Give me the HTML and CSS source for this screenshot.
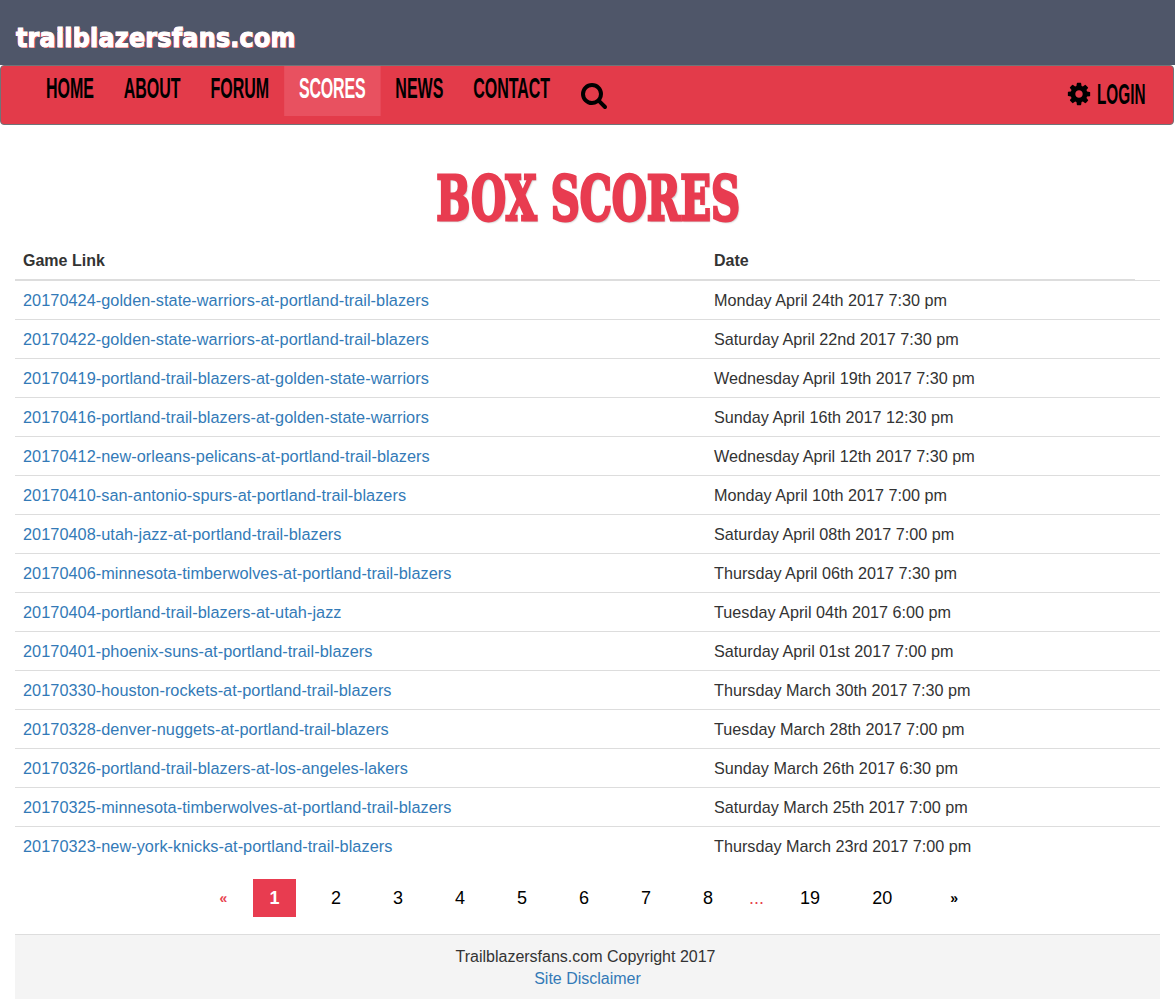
FILE: index.html
```html
<!DOCTYPE html>
<html lang="en">
<head>
  <meta charset="UTF-8">
  <meta name="viewport" content="width=device-width, initial-scale=1.0">
  <title>Box Scores</title>
  <link rel="stylesheet" href="styles.css">
</head>
<body>
  <header class="site-header">
    <a class="logo" href="#">trailblazersfans.com</a>
  </header>

  <nav class="navbar">
    <div class="nav-left">
      <ul class="nav-links">
        <li><a href="#">HOME</a></li>
        <li><a href="#">ABOUT</a></li>
        <li><a href="#">FORUM</a></li>
        <li class="active"><a href="#">SCORES</a></li>
        <li><a href="#">NEWS</a></li>
        <li><a href="#">CONTACT</a></li>
      </ul>
    </div>
    <a class="search-link" href="#">
      <svg class="search-icon" viewBox="0 0 1664 1664"><path d="M1152 704q0-185-131.5-316.5t-316.5-131.5-316.5 131.5-131.5 316.5 131.5 316.5 316.5 131.5 316.5-131.5 131.5-316.5zm512 832q0 52-38 90t-90 38q-54 0-90-38l-343-342q-179 124-399 124-143 0-273.5-55.5t-225-150-150-225-55.5-273.5 55.5-273.5 150-225 225-150 273.5-55.5 273.5 55.5 225 150 150 225 55.5 273.5q0 220-124 399l343 343q37 37 37 90z"/></svg>
    </a>
    <a class="login-link" href="#">
      <svg class="gear-icon" viewBox="0 0 1792 1792"><path d="M1152 896q0-106-75-181t-181-75-181 75-75 181 75 181 181 75 181-75 75-181zm512-109v222q0 12-8 23t-20 13l-185 28q-19 54-39 91 35 50 107 138 10 12 10 25t-9 23q-27 37-99 108t-94 71q-12 0-26-9l-138-108q-44 23-91 38-16 136-29 186-7 28-36 28h-222q-14 0-24.5-8.5t-11.5-21.5l-28-184q-49-16-90-37l-141 107q-10 9-25 9-14 0-25-11-126-114-165-168-7-10-7-23 0-12 8-23 15-21 51-66.5t54-70.5q-27-50-41-99l-183-27q-13-2-21-12.5t-8-23.5v-222q0-12 8-23t19-13l186-28q14-46 39-92-40-57-107-138-10-12-10-24 0-10 9-23 26-36 98.5-107.5t94.5-71.5q13 0 26 10l138 107q44-23 91-38 16-136 29-186 7-28 36-28h222q14 0 24.5 8.5t11.5 21.5l28 184q49 16 90 37l142-107q9-9 24-9 13 0 25 10 129 119 165 170 7 8 7 22 0 12-8 23-15 21-51 66.5t-54 70.5q26 50 41 98l183 28q13 2 21 12.5t8 23.5z"/></svg>
      <span class="login-text">LOGIN</span>
    </a>
  </nav>

  <main class="content">
    <h1 class="page-title"><span>BOX SCORES</span></h1>

    <table class="scores">
      <thead>
        <tr>
          <th class="col-game">Game Link</th>
          <th class="col-date">Date</th>
          <th class="col-gap"></th>
        </tr>
      </thead>
      <tbody>
        <tr><td><a href="#">20170424-golden-state-warriors-at-portland-trail-blazers</a></td><td colspan="2">Monday April 24th 2017 7:30 pm</td></tr>
        <tr><td><a href="#">20170422-golden-state-warriors-at-portland-trail-blazers</a></td><td colspan="2">Saturday April 22nd 2017 7:30 pm</td></tr>
        <tr><td><a href="#">20170419-portland-trail-blazers-at-golden-state-warriors</a></td><td colspan="2">Wednesday April 19th 2017 7:30 pm</td></tr>
        <tr><td><a href="#">20170416-portland-trail-blazers-at-golden-state-warriors</a></td><td colspan="2">Sunday April 16th 2017 12:30 pm</td></tr>
        <tr><td><a href="#">20170412-new-orleans-pelicans-at-portland-trail-blazers</a></td><td colspan="2">Wednesday April 12th 2017 7:30 pm</td></tr>
        <tr><td><a href="#">20170410-san-antonio-spurs-at-portland-trail-blazers</a></td><td colspan="2">Monday April 10th 2017 7:00 pm</td></tr>
        <tr><td><a href="#">20170408-utah-jazz-at-portland-trail-blazers</a></td><td colspan="2">Saturday April 08th 2017 7:00 pm</td></tr>
        <tr><td><a href="#">20170406-minnesota-timberwolves-at-portland-trail-blazers</a></td><td colspan="2">Thursday April 06th 2017 7:30 pm</td></tr>
        <tr><td><a href="#">20170404-portland-trail-blazers-at-utah-jazz</a></td><td colspan="2">Tuesday April 04th 2017 6:00 pm</td></tr>
        <tr><td><a href="#">20170401-phoenix-suns-at-portland-trail-blazers</a></td><td colspan="2">Saturday April 01st 2017 7:00 pm</td></tr>
        <tr><td><a href="#">20170330-houston-rockets-at-portland-trail-blazers</a></td><td colspan="2">Thursday March 30th 2017 7:30 pm</td></tr>
        <tr><td><a href="#">20170328-denver-nuggets-at-portland-trail-blazers</a></td><td colspan="2">Tuesday March 28th 2017 7:00 pm</td></tr>
        <tr><td><a href="#">20170326-portland-trail-blazers-at-los-angeles-lakers</a></td><td colspan="2">Sunday March 26th 2017 6:30 pm</td></tr>
        <tr><td><a href="#">20170325-minnesota-timberwolves-at-portland-trail-blazers</a></td><td colspan="2">Saturday March 25th 2017 7:00 pm</td></tr>
        <tr><td><a href="#">20170323-new-york-knicks-at-portland-trail-blazers</a></td><td colspan="2">Thursday March 23rd 2017 7:00 pm</td></tr>
      </tbody>
    </table>

    <div class="pagination">
      <a class="page-arrow prev" href="#">«</a>
      <a class="page current" href="#">1</a>
      <a class="page" href="#">2</a>
      <a class="page" href="#">3</a>
      <a class="page" href="#">4</a>
      <a class="page" href="#">5</a>
      <a class="page" href="#">6</a>
      <a class="page" href="#">7</a>
      <a class="page" href="#">8</a>
      <span class="page-dots">...</span>
      <a class="page" href="#">19</a>
      <a class="page" href="#">20</a>
      <a class="page-arrow next" href="#">»</a>
    </div>

    <footer class="site-footer">
      <p>Trailblazersfans.com Copyright 2017</p>
      <a href="#">Site Disclaimer</a>
    </footer>
  </main>
</body>
</html>
```

FILE: styles.css
```css
/* General Styles */
body {
  font-family: 'Liberation Sans', Arial, sans-serif;
  font-size: 16px;
  line-height: 22px;
  margin: 0;
  padding: 0;
  background-color: #fff;
  color: #333;
}

a {
  color: #337ab7;
  text-decoration: none;
}

/* Header */
.site-header {
  height: 65px;
  background-color: #4f5669;
  box-sizing: border-box;
  padding: 21px 0 0 16px;
}

.logo {
  display: inline-block;
  font-family: 'DejaVu Sans', sans-serif;
  font-weight: 700;
  font-size: 24px;
  line-height: 34px;
  letter-spacing: 0.15px;
  color: #fff;
  -webkit-text-stroke: 1px #fff;
  text-shadow: 1px 1px 0 #e63b4b, -1px 0 0 #e63b4b;
  transform: scaleY(1.14);
}

/* Navbar */
.navbar {
  display: flex;
  align-items: flex-start;
  height: 60px;
  box-sizing: border-box;
  background-color: #e33b4a;
  border: 1px solid #6f7478;
  border-radius: 4px;
  margin-right: 1px;
}

.nav-left {
  width: 565px;
  flex-shrink: 0;
  padding-left: 30px;
  box-sizing: border-box;
}

.nav-links {
  display: flex;
  list-style: none;
  margin: 0;
  padding: 0;
  transform: scaleX(0.533);
  transform-origin: left top;
  font-size: 30px;
  font-weight: 700;
  white-space: nowrap;
}

.nav-links a {
  display: block;
  height: 50px;
  line-height: 44px;
  padding: 0 28px;
  color: #000;
}

.nav-links .active a {
  background-color: #e85160;
  color: #fff;
  letter-spacing: -0.3px;
}

.search-link {
  display: block;
  margin: 17px 0 0 15px;
}

.search-icon {
  display: block;
  width: 26px;
  height: 26px;
  fill: #000;
}

.login-link {
  display: flex;
  align-items: center;
  margin: 15px 27px 0 auto;
  color: #000;
}

.gear-icon {
  width: 26px;
  height: 26px;
  fill: #000;
}

.login-text {
  display: block;
  width: 49px;
  margin-left: 5px;
  font-size: 30px;
  font-weight: 700;
  line-height: 26px;
  transform: scaleX(0.51);
  transform-origin: left center;
}

/* Main */
.content {
  padding: 0 15px;
}

.page-title {
  margin: 0;
  padding: 41px 0 9px;
  text-align: center;
  line-height: 66px;
  font-family: 'DejaVu Serif', serif;
  font-size: 61px;
  font-weight: 700;
  color: #e83c50;
}

.page-title span {
  display: inline-block;
  white-space: nowrap;
  margin-left: 2px;
  transform: scaleX(0.66);
  -webkit-text-stroke: 3px #e83c50;
  text-shadow: 2px 2px 2px #c9c9c9;
}

/* Table */
.scores {
  width: 100%;
  table-layout: fixed;
  border-collapse: separate;
  border-spacing: 0;
}

.col-game {
  width: 675px;
}

.col-gap {
  width: 25px;
}

.scores th {
  padding: 9px 8px 7px;
  text-align: left;
  font-weight: 700;
  border-bottom: 2px solid #ddd;
}

.scores th.col-gap {
  padding: 0;
  border-bottom-width: 1px;
}

.scores td {
  padding: 8px;
  font-size: 16.2px;
  border-bottom: 1px solid #ddd;
}

.scores td a {
  font-size: 16.3px;
  letter-spacing: 0.04px;
}

.scores tr:last-child td {
  border-bottom: none;
}

/* Pagination */
.pagination {
  display: flex;
  align-items: center;
  gap: 20px;
  height: 38px;
  margin: 14px 0 17px;
  padding-left: 199px;
  font-size: 18px;
}

.pagination a,
.page-dots {
  display: block;
  line-height: 38px;
  text-align: center;
}

.page {
  padding: 0 16px;
  color: #000;
}

.page.current {
  width: 11px;
  margin-right: -1px;
  background-color: #e83c50;
  color: #fff;
  font-weight: 700;
}

.page-arrow {
  font-size: 14px;
  font-weight: 700;
}

.prev {
  width: 19px;
  color: #e8434f;
}

.next {
  width: 52px;
  color: #000;
}

.page-dots {
  width: 15px;
  color: #e8434f;
}

/* Footer */
.site-footer {
  height: 65px;
  box-sizing: border-box;
  padding-top: 11px;
  background-color: #f4f4f4;
  border-top: 1px solid #ddd;
  text-align: center;
}

.site-footer p {
  margin: 0;
  padding-right: 4px;
}
```
